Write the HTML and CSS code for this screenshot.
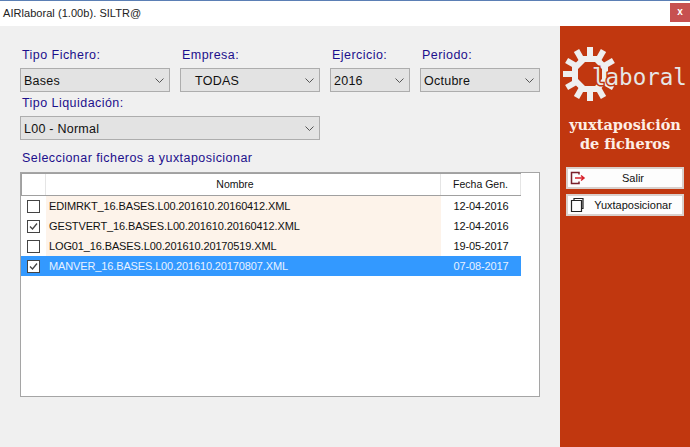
FILE: index.html
```html
<!DOCTYPE html>
<html lang="es">
<head>
    <meta charset="UTF-8">
    <title>AIRlaboral (1.00b). SILTR@</title>
    <link rel="stylesheet" href="styles.css">
</head>
<body>
    <div class="titlebar">
        <span class="title">AIRlaboral (1.00b). SILTR@</span>
        <span class="close">x</span>
    </div>
    <div class="window">
        <div class="main">
            <div class="filters">
                <div class="field f-tipo">
                    <label>Tipo Fichero:</label>
                    <div class="combo"><span>Bases</span><svg class="arrow" viewBox="0 0 9 5"><path d="M.5.5l4 4 4-4"/></svg></div>
                </div>
                <div class="field f-empresa">
                    <label>Empresa:</label>
                    <div class="combo combo-indent"><span>TODAS</span><svg class="arrow" viewBox="0 0 9 5"><path d="M.5.5l4 4 4-4"/></svg></div>
                </div>
                <div class="field f-ejercicio">
                    <label>Ejercicio:</label>
                    <div class="combo"><span>2016</span><svg class="arrow" viewBox="0 0 9 5"><path d="M.5.5l4 4 4-4"/></svg></div>
                </div>
                <div class="field f-periodo">
                    <label>Periodo:</label>
                    <div class="combo"><span>Octubre</span><svg class="arrow" viewBox="0 0 9 5"><path d="M.5.5l4 4 4-4"/></svg></div>
                </div>
            </div>
            <div class="field f-liquidacion">
                <label>Tipo Liquidación:</label>
                <div class="combo"><span>L00 - Normal</span><svg class="arrow" viewBox="0 0 9 5"><path d="M.5.5l4 4 4-4"/></svg></div>
            </div>
            <div class="list-label">Seleccionar ficheros a yuxtaposicionar</div>
            <div class="list">
                <div class="list-head">
                    <div class="col-check"></div>
                    <div class="col-name">Nombre</div>
                    <div class="col-date">Fecha Gen.</div>
                </div>
                <div class="row">
                    <div class="col-check"><span class="check"></span></div>
                    <div class="col-name">EDIMRKT_16.BASES.L00.201610.20160412.XML</div>
                    <div class="col-date">12-04-2016</div>
                </div>
                <div class="row">
                    <div class="col-check"><span class="check"><svg viewBox="0 0 11 11"><path d="M2 5.500l2.500 2.500 4.500-5.500"/></svg></span></div>
                    <div class="col-name">GESTVERT_16.BASES.L00.201610.20160412.XML</div>
                    <div class="col-date">12-04-2016</div>
                </div>
                <div class="row">
                    <div class="col-check"><span class="check"></span></div>
                    <div class="col-name">LOG01_16.BASES.L00.201610.20170519.XML</div>
                    <div class="col-date">19-05-2017</div>
                </div>
                <div class="row selected">
                    <div class="col-check"><span class="check"><svg viewBox="0 0 11 11"><path d="M2 5.500l2.500 2.500 4.500-5.500"/></svg></span></div>
                    <div class="col-name">MANVER_16.BASES.L00.201610.20170807.XML</div>
                    <div class="col-date">07-08-2017</div>
                </div>
            </div>
        </div>
        <div class="side">
            <svg class="logo" viewBox="0 0 130 60">
                <g fill="#efefef">
                    <path d="M27 3h6v13h-6z"/>
                    <path d="M27 3h6v13h-6z" transform="rotate(30 30 30)"/>
                    <path d="M27 3h6v13h-6z" transform="rotate(60 30 30)"/>
                    <path d="M27 3h6v13h-6z" transform="rotate(120 30 30)"/>
                    <path d="M27 3h6v13h-6z" transform="rotate(150 30 30)"/>
                    <path d="M27 3h6v13h-6z" transform="rotate(180 30 30)"/>
                    <path d="M27 3h6v13h-6z" transform="rotate(-150 30 30)"/>
                    <path d="M27 3h6v13h-6z" transform="rotate(-120 30 30)"/>
                    <path d="M27 3h6v13h-6z" transform="rotate(-90 30 30)"/>
                    <path d="M27 3h6v13h-6z" transform="rotate(-60 30 30)"/>
                    <path d="M27 3h6v13h-6z" transform="rotate(-30 30 30)"/>
                    <path fill-rule="evenodd" d="M22.500 12h15L48 22.500v15L37.500 48h-15L12 37.500v-15zM25 18l-7 7v10l7 7h10l7-7V25l-7-7z"/>
                </g>
                <text class="logo-text" x="32" y="41">laboral</text>
            </svg>
            <div class="side-title">yuxtaposición<br>de ficheros</div>
            <div class="btn">
                <svg class="btn-icon" viewBox="0 0 16 14"><path class="salir-a" d="M9 3.500V1.500H1.500v11H9v-2"/><path class="salir-b" d="M5 7h9M11 4.500L14 7l-3 2.500"/></svg>
                <span>Salir</span>
            </div>
            <div class="btn">
                <svg class="btn-icon" viewBox="0 0 16 16"><path class="hoja" d="M1.500 3.500v11h10v-11zM4 3.500v-2h9v10h-1.500"/></svg>
                <span>Yuxtaposicionar</span>
            </div>
        </div>
    </div>
</body>
</html>
```

FILE: styles.css
```css
* {
    box-sizing: border-box;
}

html, body {
    margin: 0;
    padding: 0;
    height: 100%;
    overflow: hidden;
}

body {
    background-color: #f0f0f0;
    font-family: "Liberation Sans", Arial, sans-serif;
    font-size: 12px;
    color: #111;
    display: flex;
    flex-direction: column;
}

.titlebar {
    height: 26px;
    flex: none;
    background-color: #fff;
    border-top: 1px solid #5b7fb5;
    display: flex;
    justify-content: space-between;
    padding-left: 3px;
}

.title {
    line-height: 24px;
    font-size: 11px;
    letter-spacing: .05px;
    color: #222;
}

.close {
    width: 20px;
    height: 19px;
    margin-top: 2px;
    background-color: #c75050;
    color: #fff;
    font-size: 10px;
    font-weight: bold;
    line-height: 17px;
    text-align: center;
}

.window {
    flex: 1;
    display: flex;
}

.main {
    width: 560px;
    padding: 20px 20px 0;
}

.filters {
    display: flex;
    gap: 10px;
}

.f-tipo { width: 150px; }
.f-empresa { width: 140px; }
.f-ejercicio { width: 80px; }
.f-periodo { width: 120px; }
.f-liquidacion { width: 300px; }

label, .list-label {
    display: block;
    height: 22px;
    padding: 1px 0 0 2px;
    color: #1c0f8c;
    font-size: 12.500px;
    letter-spacing: .45px;
    line-height: 16px;
}

.combo {
    height: 24px;
    background-color: #e3e3e3;
    border: 1px solid #adadad;
    display: flex;
    align-items: center;
    justify-content: space-between;
    padding: 1px 5px 0 3px;
    font-size: 12.500px;
    letter-spacing: .25px;
}

.combo-indent {
    padding-left: 14px;
}

.arrow {
    width: 9px;
    height: 5px;
    fill: none;
    stroke: #555;
    stroke-width: 1;
}

.f-liquidacion label {
    height: 24px;
    padding-top: 3px;
}

.list-label {
    margin-top: 10px;
    height: 22px;
    padding-top: 0;
}

.list {
    height: 225px;
    width: 520px;
    background-color: #fff;
    border: 1px solid #a5a5a5;
}

.list-head {
    display: flex;
    height: 23px;
    width: 500px;
    border-top: 1px solid #a0a0a0;
    border-left: 1px solid #a0a0a0;
    border-bottom: 1px solid #a0a0a0;
    font-size: 10.500px;
    line-height: 21px;
    color: #111;
}

.list-head .col-check,
.list-head .col-name,
.list-head .col-date {
    border-right: 1px solid #e5e5e5;
}

.list-head .col-name {
    text-align: center;
    padding: 0 16px 0 0;
}

.col-check {
    width: 24px;
    flex: none;
    display: flex;
    align-items: center;
    padding-left: 5px;
}

.col-name {
    width: 395px;
    flex: none;
    padding-left: 3px;
}

.col-date {
    width: 80px;
    flex: none;
    text-align: center;
}

.row {
    display: flex;
    width: 500px;
    height: 20px;
    line-height: 20px;
    font-size: 11px;
    letter-spacing: -.13px;
    color: #111;
    padding-left: 1px;
}

.row .col-name {
    background-color: #fdf3ea;
}

.row.selected {
    background-color: #3399ff;
    color: #e8f2ff;
}

.row.selected .col-name {
    background-color: transparent;
}

.check {
    width: 13px;
    height: 13px;
    border: 1px solid #444;
    background-color: #fff;
    display: block;
}

.check svg {
    display: block;
    width: 11px;
    height: 11px;
    fill: none;
    stroke: #444;
    stroke-width: 1.300;
}

.side {
    width: 130px;
    background-color: #c1370f;
    display: flex;
    flex-direction: column;
    align-items: center;
    padding-top: 18px;
}

.logo {
    width: 130px;
    height: 60px;
    display: block;
    flex: none;
}

.logo-text {
    font-family: "DejaVu Sans Mono", monospace;
    font-size: 22.500px;
    fill: #e6e6e6;
    stroke: #c1370f;
    stroke-width: 3px;
    paint-order: stroke;
}

.side-title {
    margin-top: 11px;
    font-family: "DejaVu Serif", serif;
    font-weight: bold;
    font-size: 14.500px;
    line-height: 19px;
    color: #fdeee6;
    text-align: center;
}

.btn {
    width: 118px;
    height: 22px;
    flex: none;
    margin-top: 5px;
    background-color: #fdfdfd;
    border: 2px solid #d9d0cc;
    position: relative;
    padding-left: 16px;
    text-align: center;
    font-size: 11px;
    line-height: 18px;
    color: #111;
}

.side-title + .btn {
    margin-top: 14px;
}

.btn-icon {
    position: absolute;
    left: 2px;
    top: 1px;
    width: 16px;
    height: 16px;
    fill: none;
}

.salir-a {
    stroke: #7a1f2a;
    stroke-width: 1.500;
}

.salir-b {
    stroke: #d8202a;
    stroke-width: 1.500;
}

.hoja {
    stroke: #222;
    stroke-width: 1.200;
}
```
